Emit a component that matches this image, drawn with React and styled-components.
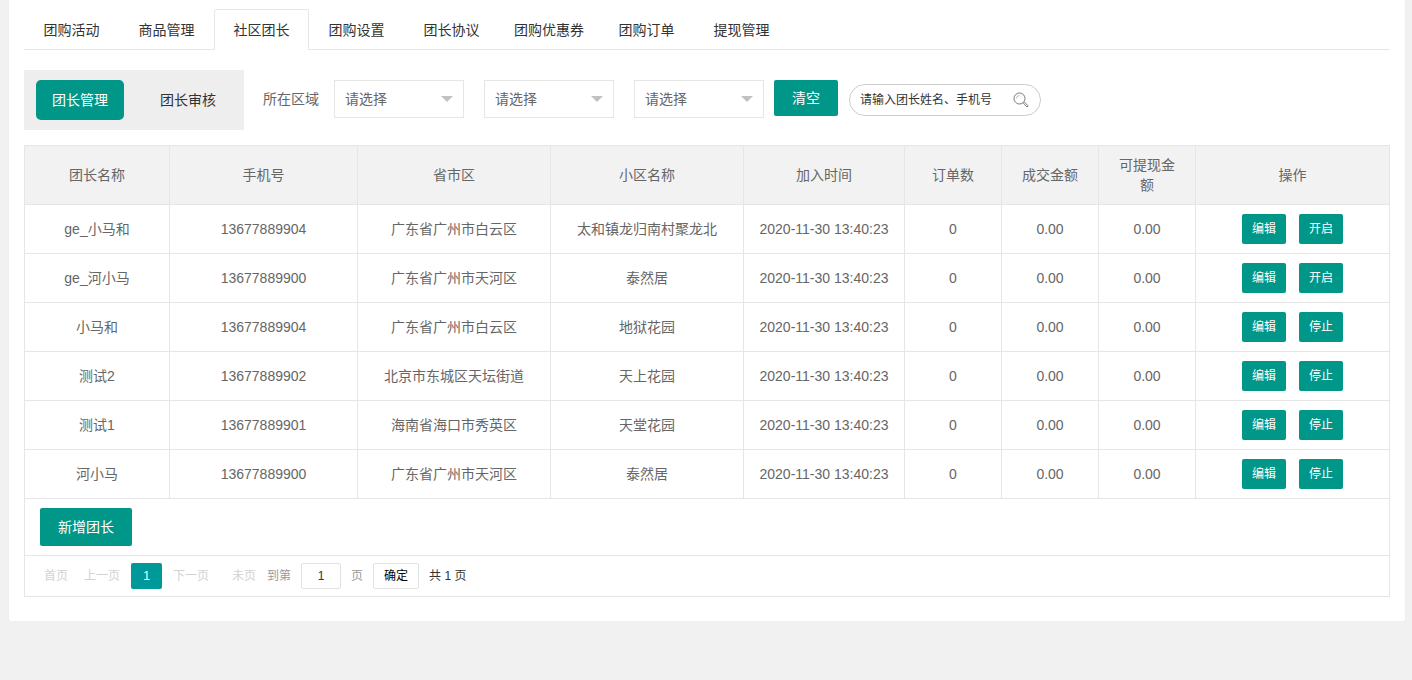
import styled, { createGlobalStyle } from "styled-components";
import { useState } from "react";

const tabs = ["团购活动", "商品管理", "社区团长", "团购设置", "团长协议", "团购优惠券", "团购订单", "提现管理"];

const columns = [
    { label: "团长名称", width: 145 },
    { label: "手机号", width: 188 },
    { label: "省市区", width: 193 },
    { label: "小区名称", width: 193 },
    { label: "加入时间", width: 161 },
    { label: "订单数", width: 97 },
    { label: "成交金额", width: 97 },
    { label: "可提现金额", width: 97 },
    { label: "操作", width: 194 },
];

const leaders = [
    { name: "ge_小马和", phone: "13677889904", region: "广东省广州市白云区", estate: "太和镇龙归南村聚龙北", running: false },
    { name: "ge_河小马", phone: "13677889900", region: "广东省广州市天河区", estate: "泰然居", running: false },
    { name: "小马和", phone: "13677889904", region: "广东省广州市白云区", estate: "地狱花园", running: true },
    { name: "测试2", phone: "13677889902", region: "北京市东城区天坛街道", estate: "天上花园", running: true },
    { name: "测试1", phone: "13677889901", region: "海南省海口市秀英区", estate: "天堂花园", running: true },
    { name: "河小马", phone: "13677889900", region: "广东省广州市天河区", estate: "泰然居", running: true },
];

const AreaSelect = ({ label }) => (
    <SelectBox>
        <Select aria-label={label} defaultValue="">
            <option value="">请选择</option>
        </Select>
        <Caret />
    </SelectBox>
);

const Filters = () => {
    const [keyword, setKeyword] = useState("");

    return (
        <Toolbar>
            <Switcher>
                <SwitchButton type="button" $active>团长管理</SwitchButton>
                <SwitchButton type="button">团长审核</SwitchButton>
            </Switcher>
            <Areas>
                <AreaLabel>所在区域</AreaLabel>
                <AreaSelect label="省" />
                <AreaSelect label="市" />
                <AreaSelect label="区" />
            </Areas>
            <ClearButton type="button">清空</ClearButton>
            <SearchBox>
                <SearchInput
                    aria-label="搜索团长"
                    placeholder="请输入团长姓名、手机号"
                    value={keyword}
                    onChange={e => setKeyword(e.target.value)}
                />
                <SearchButton type="button" aria-label="搜索">
                    <svg width="16" height="16" viewBox="0 0 16 16" fill="none" stroke="#777">
                        <circle cx="6.5" cy="6.5" r="5.5" />
                        <path d="M3.5 6.5a3 3 0 0 1 3-3" stroke="#aaa" strokeWidth="0.8" />
                        <path d="M10.4 11.2l1-1 3.8 3.6-1.2 1.2z" strokeWidth="0.9" />
                    </svg>
                </SearchButton>
            </SearchBox>
        </Toolbar>
    );
};

const LeaderTable = () => {
    const [page, setPage] = useState("1");

    return (
        <Table>
            <colgroup>
                {columns.map(column => <col key={column.label} width={column.width} />)}
            </colgroup>
            <thead>
                <tr>
                    {columns.map(column => <HeadCell key={column.label}>{column.label}</HeadCell>)}
                </tr>
            </thead>
            <tbody>
                {leaders.map((leader, index) => (
                    <tr key={index}>
                        <Cell>{leader.name}</Cell>
                        <Cell>{leader.phone}</Cell>
                        <Cell>{leader.region}</Cell>
                        <Cell>{leader.estate}</Cell>
                        <Cell>2020-11-30 13:40:23</Cell>
                        <Cell>0</Cell>
                        <Cell>0.00</Cell>
                        <Cell>0.00</Cell>
                        <Cell>
                            <Actions>
                                <RowButton type="button">编辑</RowButton>
                                <RowButton type="button">{leader.running ? "停止" : "开启"}</RowButton>
                            </Actions>
                        </Cell>
                    </tr>
                ))}
            </tbody>
            <tfoot>
                <tr>
                    <FootCell colSpan={columns.length}>
                        <AddButton type="button">新增团长</AddButton>
                    </FootCell>
                </tr>
                <tr>
                    <PagerCell colSpan={columns.length}>
                        <Pager>
                            <PageLink href="#">首页</PageLink>
                            <PageLink href="#">上一页</PageLink>
                            <CurrentPage>1</CurrentPage>
                            <PageLink href="#">下一页</PageLink>
                            <LastLink href="#">未页</LastLink>
                            <Jump onSubmit={e => e.preventDefault()}>
                                <label htmlFor="page">到第</label>
                                <PageInput id="page" value={page} onChange={e => setPage(e.target.value)} />
                                <span>页</span>
                                <ConfirmButton type="submit">确定</ConfirmButton>
                                <Total>共 1 页</Total>
                            </Jump>
                        </Pager>
                    </PagerCell>
                </tr>
            </tfoot>
        </Table>
    );
};

const App = () => {
    const [activeTab, setActiveTab] = useState("社区团长");

    return (
        <>
            <GlobalStyle />
            <Card>
                <TabBar role="tablist">
                    {tabs.map(tab => (
                        <Tab
                            key={tab}
                            type="button"
                            role="tab"
                            aria-selected={tab === activeTab}
                            $active={tab === activeTab}
                            onClick={() => setActiveTab(tab)}
                        >
                            {tab}
                        </Tab>
                    ))}
                </TabBar>
                <Filters />
                <LeaderTable />
            </Card>
        </>
    );
};

const GlobalStyle = createGlobalStyle`
    * {
        box-sizing: border-box;
    }

    body {
        margin: 0;
        background-color: #f1f1f1;
        color: #666;
        font-size: 14px;
        line-height: 20px;
    }

    body, button, input, select {
        font-family: "Liberation Sans", "Noto Sans CJK SC", sans-serif;
    }

    button {
        line-height: 20px;
    }
`;

const Card = styled.main`
    margin: 0 7px 0 9px;
    padding: 9px 15px 24px;
    background-color: #fff;
    border-radius: 2px;
    box-shadow: 0 1px 2px rgba(0, 0, 0, 0.05);
`;

const TabBar = styled.div`
    display: flex;
    height: 41px;
    border-bottom: 1px solid #e6e6e6;
`;

const Tab = styled.button`
    min-width: 95px;
    height: 41px;
    padding: 0 14px;
    border: 1px solid ${({ $active }) => ($active ? "#e6e6e6" : "transparent")};
    border-bottom-color: ${({ $active }) => ($active ? "#fff" : "transparent")};
    border-radius: 2px 2px 0 0;
    background-color: transparent;
    color: #333;
    font-size: 14px;
    white-space: nowrap;
    cursor: pointer;
`;

const Toolbar = styled.div`
    display: flex;
    align-items: flex-start;
    margin: 20px 0 15px;
`;

const Switcher = styled.div`
    display: flex;
    gap: 20px;
    padding: 10px 12px;
    background-color: #eee;
`;

const SwitchButton = styled.button`
    width: 88px;
    height: 40px;
    padding: 0;
    border: 0;
    border-radius: 5px;
    background-color: ${({ $active }) => ($active ? "#009688" : "transparent")};
    color: ${({ $active }) => ($active ? "#fff" : "#333")};
    font-size: 14px;
    cursor: pointer;
`;

const Areas = styled.div`
    display: flex;
    align-items: center;
    gap: 20px;
    margin: 10px 10px 0 19px;
`;

const AreaLabel = styled.span`
    width: 51px;
    white-space: nowrap;
`;

const SelectBox = styled.div`
    display: grid;
    align-items: center;
    width: 130px;

    > * {
        grid-area: 1 / 1;
    }
`;

const Select = styled.select`
    width: 100%;
    height: 38px;
    padding: 0 30px 0 10px;
    border: 1px solid #e6e6e6;
    border-radius: 0;
    background-color: #fff;
    color: #666;
    font-size: 14px;
    appearance: none;
`;

const Caret = styled.span`
    justify-self: end;
    margin-right: 11px;
    border: 6px solid transparent;
    border-top-color: #c2c2c2;
    border-bottom-width: 0;
    pointer-events: none;
`;

const SolidButton = styled.button`
    border: 0;
    border-radius: 2px;
    background-color: #009688;
    color: #fff;
    font-size: 14px;
    white-space: nowrap;
    cursor: pointer;
`;

const ClearButton = styled(SolidButton)`
    height: 36px;
    margin-top: 10px;
    padding: 0 18px;
`;

const SearchBox = styled.div`
    display: flex;
    align-items: center;
    width: 192px;
    height: 32px;
    margin: 14px 0 0 11px;
    padding: 0 11px 0 10px;
    border: 1px solid #ccc;
    border-radius: 16px;
`;

const SearchInput = styled.input`
    flex: 1;
    min-width: 0;
    padding: 0;
    border: 0;
    outline: none;
    background-color: transparent;
    color: #333;
    font-size: 12px;

    &::placeholder {
        color: #333;
    }
`;

const SearchButton = styled.button`
    display: flex;
    padding: 0;
    border: 0;
    background: none;
    cursor: pointer;
`;

const Table = styled.table`
    width: 100%;
    table-layout: fixed;
    border-collapse: collapse;
`;

const Cell = styled.td`
    padding: 9px 0;
    border: 1px solid #e6e6e6;
    text-align: center;
`;

const HeadCell = styled.th`
    padding: 9px 15px;
    border: 1px solid #e6e6e6;
    background-color: #f2f2f2;
    font-weight: 400;
    text-align: center;
`;

const FootCell = styled.td`
    padding: 9px 15px;
    border: 1px solid #e6e6e6;
`;

const PagerCell = styled.td`
    padding: 7px 11px;
    border: 1px solid #e6e6e6;
`;

const Actions = styled.div`
    display: flex;
    justify-content: center;
    gap: 13px;
`;

const RowButton = styled(SolidButton)`
    width: 44px;
    height: 30px;
    padding: 0;
    font-size: 12px;
`;

const AddButton = styled(SolidButton)`
    display: block;
    height: 38px;
    padding: 0 18px;
`;

const Pager = styled.nav`
    display: flex;
    align-items: center;
    height: 26px;
    color: #999;
    font-size: 12px;
    white-space: nowrap;
`;

const PageLink = styled.a`
    padding: 0 8px;
    color: #d2d2d2;
    text-decoration: none;
`;

const LastLink = styled(PageLink)`
    margin-left: 7px;
`;

const CurrentPage = styled.span`
    width: 31px;
    margin: 0 3px;
    border-radius: 2px;
    background-color: #099;
    color: #fff;
    line-height: 26px;
    text-align: center;
`;

const Jump = styled.form`
    display: flex;
    align-items: center;
    gap: 10px;
    margin-left: 3px;
`;

const PageInput = styled.input`
    width: 40px;
    height: 26px;
    padding: 0;
    border: 1px solid #e2e2e2;
    border-radius: 2px;
    color: #333;
    font-size: 12px;
    text-align: center;
`;

const ConfirmButton = styled.button`
    width: 46px;
    height: 26px;
    padding: 0;
    border: 1px solid #e2e2e2;
    border-radius: 2px;
    background-color: #fff;
    color: #000;
    font-size: 12px;
    cursor: pointer;
`;

const Total = styled.span`
    color: #333;
`;

export default App;
